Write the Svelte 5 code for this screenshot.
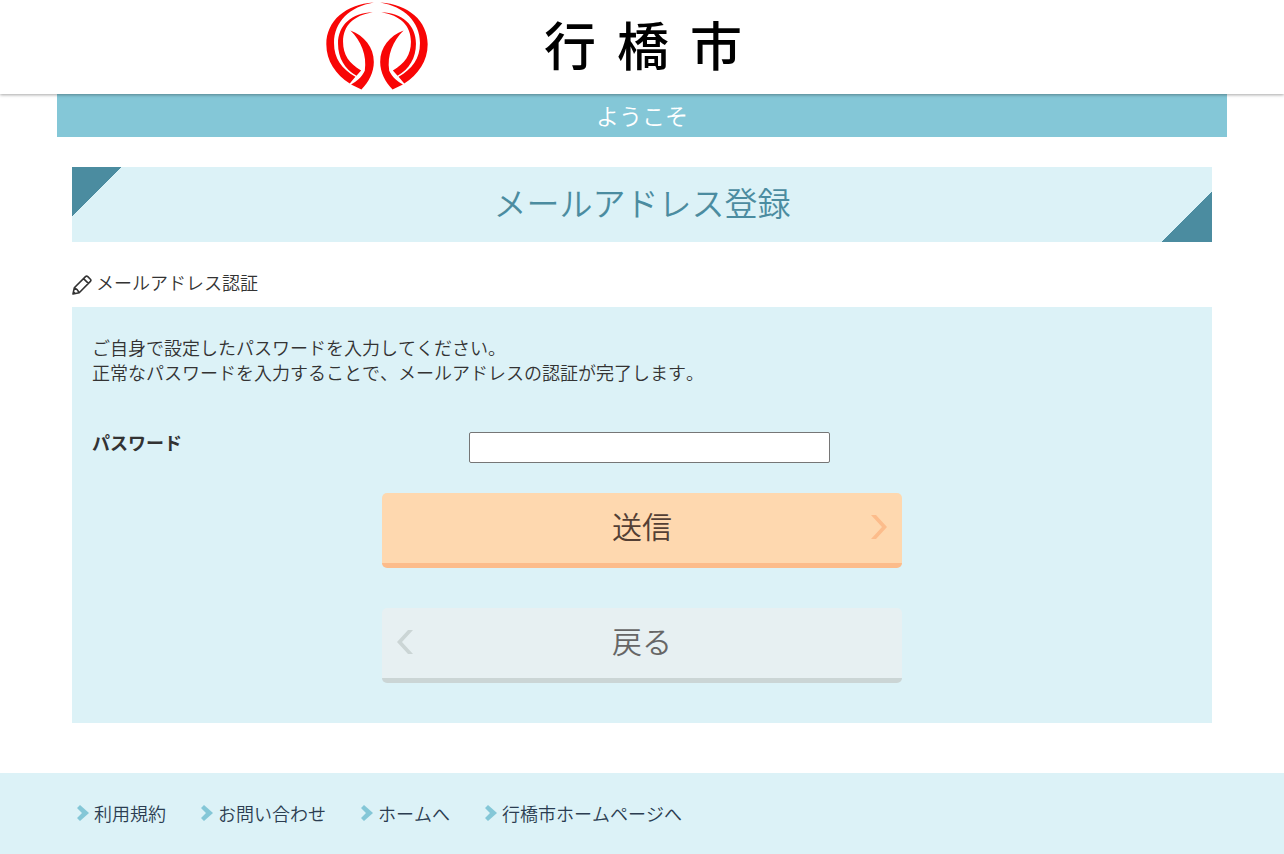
<script>
  const links = ["利用規約", "お問い合わせ", "ホームへ", "行橋市ホームページへ"];
  let password = "";
</script>

<header class="site-header">
  <div class="brand">
    <svg class="logo" viewBox="47 8 305 262" aria-hidden="true">
      <g id="wing">
        <path d="M190 9C106 14 48 64 48 134C48 184 76 225 118 251L135 231C94 207 71 177 71 130C71 67 118 21 190 9Z" />
        <path d="M187 38C124 40 83 76 83 132C83 175 103 207 138 228L152 212C116 190 98 166 98 126C98 78 130 47 187 38Z" />
        <path d="M120 93C162 109 190 143 190 187C190 218 175 247 153 269L122 254C138 246 154 232 163 213C170 167 152 124 120 93Z" />
      </g>
      <use href="#wing" transform="translate(399 0) scale(-1 1)" />
    </svg>
    <div class="city"><span>行</span><span>橋</span><span>市</span></div>
  </div>
</header>

<main class="container">
  <p class="welcome">ようこそ</p>
  <div class="content">
    <h1>メールアドレス登録</h1>
    <h2>
      <svg class="pencil" viewBox="0 0 20 20" aria-hidden="true">
        <path d="M1 19L2.3 12.8L13.5 1.6Q14.6 .6 15.8 1.6L18.4 4.2Q19.4 5.3 18.4 6.4L7.2 17.7ZM2.3 12.8Q5.5 14 7.2 17.7M11.5 3.6L16.4 8.4M1 19L1.5 17L3 18.5Z" />
      </svg>
      メールアドレス認証
    </h2>
    <form class="panel" on:submit|preventDefault>
      <p>
        ご自身で設定したパスワードを入力してください。<br />
        正常なパスワードを入力することで、メールアドレスの認証が完了します。
      </p>
      <div class="row">
        <label for="password">パスワード</label>
        <div class="field">
          <input id="password" type="password" bind:value={password} />
        </div>
      </div>
      <div class="buttons">
        <button class="submit" type="submit">
          送信
          <svg viewBox="0 0 16 24" aria-hidden="true"><path d="M0 0H5L16 12L5 24H0L11 12Z" /></svg>
        </button>
        <button class="back" type="button">
          戻る
          <svg viewBox="0 0 16 24" aria-hidden="true"><path d="M16 0H11L0 12L11 24H16L5 12Z" /></svg>
        </button>
      </div>
    </form>
  </div>
</main>

<footer>
  <ul>
    {#each links as link}
      <li>
        <a href="#top">
          <svg viewBox="0 0 12 16" aria-hidden="true"><path d="M3 0L12 8L3 16L0 13L5 8L0 3Z" /></svg>
          {link}
        </a>
      </li>
    {/each}
  </ul>
</footer>

<style>
:global(body) {
  margin: 0;
  background: #fff;
  color: #333;
  font-family: "Liberation Sans", "Noto Sans CJK JP", sans-serif;
  font-size: 18px;
  font-weight: 350;
  font-kerning: none;
  line-height: 25px;
}
.site-header {
  position: relative;
  z-index: 1;
  background: #fff;
  box-shadow: 0 1px 3px rgba(0, 0, 0, 0.35);
}
.brand {
  display: flex;
  align-items: center;
  max-width: 632px;
  height: 94px;
  margin: 0 auto;
}
.logo {
  width: 102px;
  height: 88px;
  margin-right: 116px;
  margin-bottom: 2px;
  fill: #f80606;
}
.city {
  display: flex;
  gap: 21px;
  padding-top: 2px;
  color: #000;
  font-size: 52px;
  font-weight: 500;
  line-height: 92px;
}
.container {
  max-width: 1170px;
  margin: 0 auto;
}
.welcome {
  margin: 0;
  padding: 8px 0 4px;
  background: #84c7d7;
  color: #fff;
  font-size: 23px;
  line-height: 31px;
  text-align: center;
}
.content {
  padding: 30px 15px 50px;
}
h1 {
  margin: 0;
  padding: 15px;
  background:
    linear-gradient(135deg, #4b8ca0 50%, transparent 50%) left top / 50px 50px no-repeat,
    linear-gradient(315deg, #4b8ca0 50%, transparent 50%) right bottom / 50px 50px no-repeat,
    #dcf2f7;
  color: #4b8ca0;
  font-size: 33px;
  font-weight: 350;
  line-height: 45px;
  text-align: center;
}
h2 {
  display: flex;
  align-items: center;
  gap: 4px;
  margin: 30px 0 10px;
  font-size: 18px;
  font-weight: 350;
}
.pencil {
  width: 20px;
  height: 20px;
  fill: none;
  stroke: #333;
  stroke-width: 1.6;
  stroke-linejoin: round;
}
.panel {
  padding: 30px 20px 40px;
  background: #dcf2f7;
}
.panel p {
  margin: 0 0 45px;
}
.row {
  display: flex;
  margin: 0 -15px 30px;
}
label {
  box-sizing: border-box;
  width: 33.33%;
  padding: 0 15px;
  font-weight: 700;
}
.field {
  flex: 1;
  padding: 0 15px;
}
input {
  display: block;
  box-sizing: border-box;
  width: 50%;
  height: 31px;
  padding: 2px 4px;
  border: 1px solid #767676;
  border-radius: 2px;
  background: #fff;
  font: inherit;
}
.buttons {
  display: flex;
  flex-direction: column;
  align-items: center;
  gap: 40px;
}
button {
  position: relative;
  width: 100%;
  max-width: 520px;
  height: 75px;
  padding: 0;
  border: 0;
  border-bottom: 5px solid;
  border-radius: 5px;
  font-family: inherit;
  font-size: 30px;
  font-weight: inherit;
  line-height: 70px;
  cursor: pointer;
}
button svg {
  position: absolute;
  top: 22px;
  width: 16px;
  height: 24px;
}
.submit {
  border-color: #fcbc8b;
  background: #fed8af;
  color: #533f35;
}
.submit svg {
  right: 15px;
  fill: #fcbc8b;
}
.back {
  border-color: #cbd5d5;
  background: #e7f0f2;
  color: #666;
}
.back svg {
  left: 15px;
  fill: #cbd5d5;
}
footer {
  background: #dcf2f7;
}
ul {
  display: flex;
  flex-wrap: wrap;
  gap: 10px 35px;
  max-width: 1130px;
  margin: 0 auto;
  padding: 30px 0 26px;
  list-style: none;
}
footer a {
  display: flex;
  gap: 5px;
  color: #2b3d51;
  text-decoration: none;
}
footer a svg {
  width: 12px;
  height: 16px;
  margin-top: 2px;
  fill: #84c7d7;
}
</style>
